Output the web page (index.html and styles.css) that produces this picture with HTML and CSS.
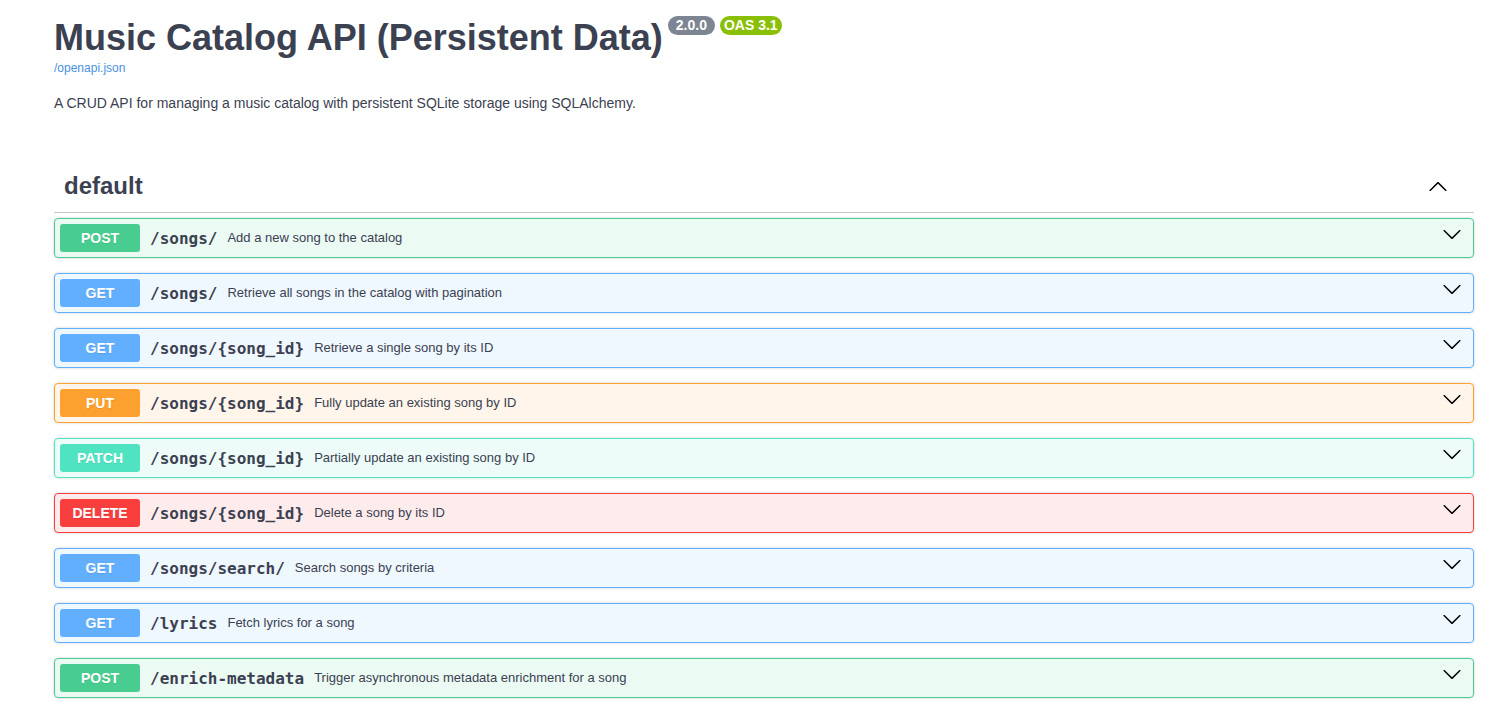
FILE: index.html
```html
<!DOCTYPE html>
<html lang="en">
<head>
<meta charset="utf-8">
<title>Music Catalog API (Persistent Data)</title>
<link rel="stylesheet" href="styles.css">
</head>
<body>
<div class="swagger">
  <div class="info">
    <hgroup class="main">
      <h2 class="title">Music Catalog API (Persistent Data)<span class="badge version">2.0.0</span><span class="badge oas">OAS 3.1</span></h2>
      <a class="spec-link" href="#">/openapi.json</a>
    </hgroup>
    <div class="description">A CRUD API for managing a music catalog with persistent SQLite storage using SQLAlchemy.</div>
  </div>

  <section class="tag-section">
    <h3 class="opblock-tag">
      <span class="tag-name">default</span>
      <svg class="arrow-up" width="20" height="20" viewBox="0 0 20 20" aria-hidden="true"><path d="M17.418 14.891c.272.268.709.268.979 0s.271-.701 0-.969l-7.908-7.83c-.27-.268-.707-.268-.979 0l-7.908 7.83c-.27.268-.27.701 0 .969.271.268.709.268.979 0L10 7.75l7.418 7.141z"/></svg>
    </h3>

    <div class="opblock post">
      <div class="summary"><span class="method">POST</span><span class="path">/songs/</span><span class="desc">Add a new song to the catalog</span>
        <svg class="arrow" width="20" height="20" viewBox="0 0 20 20" aria-hidden="true"><path d="M17.418 6.109c.272-.268.709-.268.979 0s.271.701 0 .969l-7.908 7.83c-.27.268-.707.268-.979 0l-7.908-7.83c-.27-.268-.27-.701 0-.969.271-.268.709-.268.979 0L10 13.25l7.418-7.141z"/></svg></div>
    </div>

    <div class="opblock get">
      <div class="summary"><span class="method">GET</span><span class="path">/songs/</span><span class="desc">Retrieve all songs in the catalog with pagination</span>
        <svg class="arrow" width="20" height="20" viewBox="0 0 20 20" aria-hidden="true"><path d="M17.418 6.109c.272-.268.709-.268.979 0s.271.701 0 .969l-7.908 7.83c-.27.268-.707.268-.979 0l-7.908-7.83c-.27-.268-.27-.701 0-.969.271-.268.709-.268.979 0L10 13.25l7.418-7.141z"/></svg></div>
    </div>

    <div class="opblock get">
      <div class="summary"><span class="method">GET</span><span class="path">/songs/{song_id}</span><span class="desc">Retrieve a single song by its ID</span>
        <svg class="arrow" width="20" height="20" viewBox="0 0 20 20" aria-hidden="true"><path d="M17.418 6.109c.272-.268.709-.268.979 0s.271.701 0 .969l-7.908 7.83c-.27.268-.707.268-.979 0l-7.908-7.83c-.27-.268-.27-.701 0-.969.271-.268.709-.268.979 0L10 13.25l7.418-7.141z"/></svg></div>
    </div>

    <div class="opblock put">
      <div class="summary"><span class="method">PUT</span><span class="path">/songs/{song_id}</span><span class="desc">Fully update an existing song by ID</span>
        <svg class="arrow" width="20" height="20" viewBox="0 0 20 20" aria-hidden="true"><path d="M17.418 6.109c.272-.268.709-.268.979 0s.271.701 0 .969l-7.908 7.83c-.27.268-.707.268-.979 0l-7.908-7.83c-.27-.268-.27-.701 0-.969.271-.268.709-.268.979 0L10 13.25l7.418-7.141z"/></svg></div>
    </div>

    <div class="opblock patch">
      <div class="summary"><span class="method">PATCH</span><span class="path">/songs/{song_id}</span><span class="desc">Partially update an existing song by ID</span>
        <svg class="arrow" width="20" height="20" viewBox="0 0 20 20" aria-hidden="true"><path d="M17.418 6.109c.272-.268.709-.268.979 0s.271.701 0 .969l-7.908 7.83c-.27.268-.707.268-.979 0l-7.908-7.83c-.27-.268-.27-.701 0-.969.271-.268.709-.268.979 0L10 13.25l7.418-7.141z"/></svg></div>
    </div>

    <div class="opblock delete">
      <div class="summary"><span class="method">DELETE</span><span class="path">/songs/{song_id}</span><span class="desc">Delete a song by its ID</span>
        <svg class="arrow" width="20" height="20" viewBox="0 0 20 20" aria-hidden="true"><path d="M17.418 6.109c.272-.268.709-.268.979 0s.271.701 0 .969l-7.908 7.83c-.27.268-.707.268-.979 0l-7.908-7.83c-.27-.268-.27-.701 0-.969.271-.268.709-.268.979 0L10 13.25l7.418-7.141z"/></svg></div>
    </div>

    <div class="opblock get">
      <div class="summary"><span class="method">GET</span><span class="path">/songs/search/</span><span class="desc">Search songs by criteria</span>
        <svg class="arrow" width="20" height="20" viewBox="0 0 20 20" aria-hidden="true"><path d="M17.418 6.109c.272-.268.709-.268.979 0s.271.701 0 .969l-7.908 7.83c-.27.268-.707.268-.979 0l-7.908-7.83c-.27-.268-.27-.701 0-.969.271-.268.709-.268.979 0L10 13.25l7.418-7.141z"/></svg></div>
    </div>

    <div class="opblock get">
      <div class="summary"><span class="method">GET</span><span class="path">/lyrics</span><span class="desc">Fetch lyrics for a song</span>
        <svg class="arrow" width="20" height="20" viewBox="0 0 20 20" aria-hidden="true"><path d="M17.418 6.109c.272-.268.709-.268.979 0s.271.701 0 .969l-7.908 7.83c-.27.268-.707.268-.979 0l-7.908-7.83c-.27-.268-.27-.701 0-.969.271-.268.709-.268.979 0L10 13.25l7.418-7.141z"/></svg></div>
    </div>

    <div class="opblock post">
      <div class="summary"><span class="method">POST</span><span class="path">/enrich-metadata</span><span class="desc">Trigger asynchronous metadata enrichment for a song</span>
        <svg class="arrow" width="20" height="20" viewBox="0 0 20 20" aria-hidden="true"><path d="M17.418 6.109c.272-.268.709-.268.979 0s.271.701 0 .969l-7.908 7.83c-.27.268-.707.268-.979 0l-7.908-7.83c-.27-.268-.27-.701 0-.969.271-.268.709-.268.979 0L10 13.25l7.418-7.141z"/></svg></div>
    </div>
  </section>
</div>
</body>
</html>
```

FILE: styles.css
```css
html, body {
  margin: 0;
  padding: 0;
  background: #fff;
}

body {
  font-family: "Liberation Sans", Arial, sans-serif;
  color: #3b4151;
}

.swagger {
  width: 1420px;
  margin-left: 54px;
  padding-top: 17px;
}

.main {
  margin: 0;
}

.title {
  display: flex;
  align-items: flex-start;
  margin: 0;
  font-size: 36px;
  font-weight: 700;
  line-height: 41px;
  color: #3b4151;
}

.badge {
  display: inline-block;
  margin-top: -1px;
  height: 19px;
  line-height: 19px;
  border-radius: 57px;
  font-size: 14px;
  font-weight: 700;
  color: #fff;
}

.version {
  margin-left: 5px;
  padding: 0 8px;
  background: #7d8492;
}

.oas {
  margin-left: 5px;
  padding: 0 4px;
  background: #89bf04;
}

.spec-link {
  display: block;
  margin-top: 3px;
  font-size: 12px;
  line-height: 14px;
  color: #4990e2;
  text-decoration: none;
}

.description {
  margin-top: 20px;
  font-size: 14px;
  line-height: 16px;
  color: #3b4151;
}

.tag-section {
  margin-top: 49px;
}

.opblock-tag {
  display: flex;
  align-items: center;
  justify-content: space-between;
  height: 32px;
  margin: 0 0 5px;
  padding: 10px 20px 10px 10px;
  border-bottom: 1px solid rgba(59, 65, 81, 0.3);
  font-size: 24px;
  font-weight: 700;
  color: #3b4151;
}

.arrow-up {
  margin-right: 6px;
  fill: #000;
}

.opblock {
  margin-bottom: 15px;
  border: 1px solid #000;
  border-radius: 4px;
  box-shadow: 0 0 3px rgba(0, 0, 0, 0.19);
}

.summary {
  display: flex;
  align-items: center;
  padding: 5px;
}

.method {
  display: flex;
  align-items: center;
  justify-content: center;
  width: 80px;
  height: 28px;
  border-radius: 3px;
  font-size: 14px;
  font-weight: 700;
  color: #fff;
  text-shadow: 0 1px 0 rgba(0, 0, 0, 0.1);
}

.path {
  padding: 0 10px;
  font-family: "DejaVu Sans Mono", monospace;
  font-size: 16px;
  font-weight: 700;
  color: #3b4151;
}

.desc {
  flex: 1;
  font-size: 13px;
  line-height: 15px;
  margin-top: -1px;
  color: #3b4151;
}

.arrow {
  align-self: flex-start;
  margin-right: 6px;
  fill: #000;
}

.post { border-color: #49cc90; background: rgba(73, 204, 144, 0.1); }
.post .method { background: #49cc90; }

.get { border-color: #61affe; background: rgba(97, 175, 254, 0.1); }
.get .method { background: #61affe; }

.put { border-color: #fca130; background: rgba(252, 161, 48, 0.1); }
.put .method { background: #fca130; }

.patch { border-color: #50e3c2; background: rgba(80, 227, 194, 0.1); }
.patch .method { background: #50e3c2; }

.delete { border-color: #f93e3e; background: rgba(249, 62, 62, 0.1); }
.delete .method { background: #f93e3e; }
```
